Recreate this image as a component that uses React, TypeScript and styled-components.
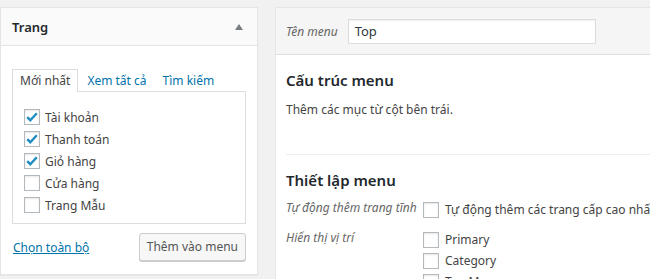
import styled, { createGlobalStyle } from 'styled-components';

const GlobalStyle = createGlobalStyle`
  html, body {
    margin: 0;
    padding: 0;
    background: #f1f1f1;
    font-family: "Noto Sans", "Open Sans", sans-serif;
    font-size: 12px;
    color: #444;
  }
`;

const Page = styled.div`
  display: flex;
  align-items: flex-start;
  gap: 17px;
  padding-top: 7px;
  width: 650px;
  height: 279px;
  overflow: hidden;
`;

const SidePanel = styled.div`
  flex: 0 0 258px;
  box-sizing: border-box;
  background: #fff;
  border: 1px solid #e5e5e5;
  box-shadow: 0 1px 1px rgba(0, 0, 0, 0.04);
`;

const SideHeader = styled.div`
  display: flex;
  align-items: center;
  justify-content: space-between;
  height: 37px;
  padding: 0 12px 0 11px;
  background: #fafafa;
  border-bottom: 1px solid #e5e5e5;
  font-size: 13px;
  font-weight: 600;
  color: #23282d;
`;

const Arrow = styled.span`
  width: 0;
  height: 0;
  border-left: 4px solid transparent;
  border-right: 4px solid transparent;
  border-bottom: 6px solid #787c82;
  margin-right: 2px;
`;

const SideBody = styled.div`
  padding: 23px 11px 13px 11px;
`;

const Tabs = styled.div`
  display: flex;
  align-items: flex-end;
  height: 22px;
`;

const Tab = styled.span<{ $active?: boolean }>`
  box-sizing: border-box;
  height: ${(p) => (p.$active ? '23px' : '22px')};
  padding: 1px 7px 0;
  margin-right: ${(p) => (p.$active ? '1px' : '0')};
  margin-bottom: ${(p) => (p.$active ? '-1px' : '0')};
  line-height: 19px;
  position: relative;
  z-index: 1;
  color: ${(p) => (p.$active ? '#444' : '#0073aa')};
  background: ${(p) => (p.$active ? '#fff' : 'transparent')};
  border: 1px solid ${(p) => (p.$active ? '#ddd' : 'transparent')};
  border-bottom: none;
`;

const TabPanel = styled.div`
  border: 1px solid #ddd;
  padding: 14px 11px 7px;
`;

const CheckRow = styled.label`
  display: flex;
  align-items: center;
  gap: 5px;
  height: 22px;
`;

const Box = styled.span`
  box-sizing: border-box;
  flex: 0 0 16px;
  width: 16px;
  height: 16px;
  border: 1px solid #b4b9be;
  background: #fff;
  box-shadow: inset 0 1px 2px rgba(0, 0, 0, 0.1);
  display: flex;
  align-items: center;
  justify-content: center;
`;

const Footer = styled.div`
  display: flex;
  align-items: center;
  justify-content: space-between;
  margin-top: 9px;
  padding-left: 1px;
`;

const Link = styled.a`
  color: #0073aa;
  text-decoration: underline;
  font-size: 12px;
`;

const Button = styled.button`
  box-sizing: border-box;
  height: 28px;
  padding: 0 7px 1px;
  font-family: inherit;
  font-size: 12px;
  color: #555;
  background: #f7f7f7;
  border: 1px solid #ccc;
  border-radius: 3px;
  box-shadow: 0 1px 0 #ccc;
`;

const MainPanel = styled.div`
  flex: 0 0 420px;
  box-sizing: border-box;
  background: #fff;
  border: 1px solid #e5e5e5;
  border-right: none;
  height: 300px;
`;

const MainHeader = styled.div`
  display: flex;
  align-items: center;
  gap: 10px;
  height: 46px;
  padding-left: 10px;
  background: #f5f5f5;
  border-bottom: 1px solid #dfdfdf;
`;

const ItalicLabel = styled.span`
  font-style: italic;
  color: #666;
  white-space: nowrap;
`;

const NameInput = styled.div`
  box-sizing: border-box;
  width: 248px;
  height: 25px;
  padding: 0 6px;
  line-height: 23px;
  font-size: 13px;
  color: #32373c;
  background: #fff;
  border: 1px solid #ddd;
  box-shadow: inset 0 1px 2px rgba(0, 0, 0, 0.07);
`;

const MainBody = styled.div`
  padding: 0 0 0 10px;
`;

const Section = styled.div<{ $divider?: boolean }>`
  border-top: ${(p) => (p.$divider ? '1px solid #eee' : 'none')};
`;

const Heading = styled.h3`
  margin: 0;
  font-size: 15px;
  font-weight: 600;
  color: #23282d;
  line-height: 22px;
`;

const Text = styled.p`
  margin: 0;
  line-height: 20px;
`;

const SettingRow = styled.div`
  display: grid;
  grid-template-columns: 137px 1fr;
  align-items: start;
`;

const OptionList = styled.div`
  display: flex;
  flex-direction: column;
`;

const Option = styled.label`
  display: flex;
  align-items: center;
  gap: 6px;
  height: 21px;
  white-space: nowrap;
`;

const Check = () => (
  <svg width="14" height="14" viewBox="0 0 14 14">
    <path d="M2.2 7.2 L5.3 10.2 L11.8 3.2" fill="none" stroke="#1e8cbe" strokeWidth="2.4" />
  </svg>
);

const pages = [
  { name: 'Tài khoản', checked: true },
  { name: 'Thanh toán', checked: true },
  { name: 'Giỏ hàng', checked: true },
  { name: 'Cửa hàng', checked: false },
  { name: 'Trang Mẫu', checked: false },
];

const App = () => {
  return (
    <>
      <GlobalStyle />
      <Page>
        <SidePanel>
          <SideHeader>
            Trang
            <Arrow />
          </SideHeader>
          <SideBody>
            <Tabs>
              <Tab $active>Mới nhất</Tab>
              <Tab>Xem tất cả</Tab>
              <Tab>Tìm kiếm</Tab>
            </Tabs>
            <TabPanel>
              {pages.map((p) => (
                <CheckRow key={p.name}>
                  <Box>{p.checked && <Check />}</Box>
                  {p.name}
                </CheckRow>
              ))}
            </TabPanel>
            <Footer>
              <Link>Chọn toàn bộ</Link>
              <Button>Thêm vào menu</Button>
            </Footer>
          </SideBody>
        </SidePanel>
        <MainPanel>
          <MainHeader>
            <ItalicLabel>Tên menu</ItalicLabel>
            <NameInput>Top</NameInput>
          </MainHeader>
          <MainBody>
            <Section style={{ paddingTop: 14, paddingBottom: 34 }}>
              <Heading>Cấu trúc menu</Heading>
              <Text style={{ marginTop: 9 }}>Thêm các mục từ cột bên trái.</Text>
            </Section>
            <Section $divider style={{ paddingTop: 14 }}>
              <Heading>Thiết lập menu</Heading>
              <SettingRow style={{ marginTop: 8 }}>
                <ItalicLabel>Tự động thêm trang tĩnh</ItalicLabel>
                <Option>
                  <Box />
                  Tự động thêm các trang cấp cao nhất mới vào menu này
                </Option>
              </SettingRow>
              <SettingRow style={{ marginTop: 9 }}>
                <ItalicLabel>Hiển thị vị trí</ItalicLabel>
                <OptionList>
                  <Option><Box />Primary</Option>
                  <Option><Box />Category</Option>
                  <Option><Box />Top Menu</Option>
                </OptionList>
              </SettingRow>
            </Section>
          </MainBody>
        </MainPanel>
      </Page>
    </>
  );
};

export default App;
